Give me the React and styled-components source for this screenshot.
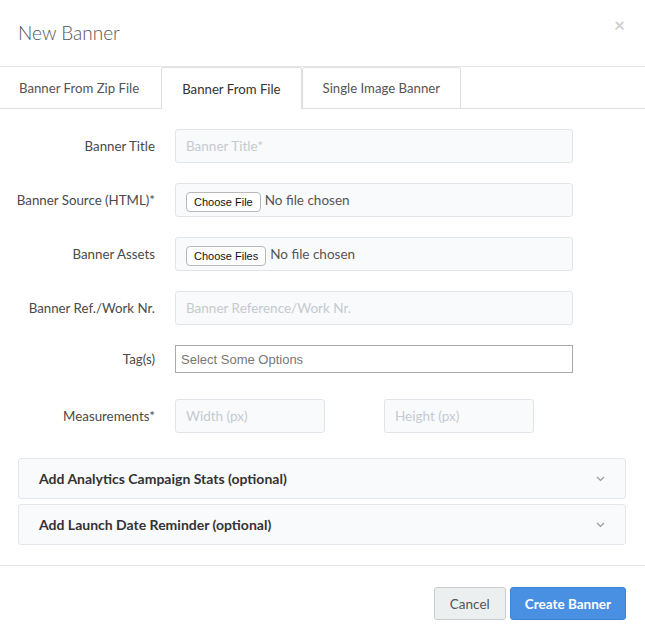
import React from 'react'
import styled, { createGlobalStyle } from 'styled-components'

const GlobalStyle = createGlobalStyle`
  html, body {
    margin: 0;
    padding: 0;
    background: #fff;
  }
  body {
    font-family: Lato, "Noto Sans", "Liberation Sans", sans-serif;
    font-size: 14px;
    color: #444;
  }
  * { box-sizing: border-box; }
`

const Modal = styled.div`
  width: 645px;
  height: 638px;
  background: #fff;
  display: flex;
  flex-direction: column;
`

const Header = styled.div`
  height: 67px;
  padding: 0 18px;
  display: flex;
  align-items: center;
  justify-content: space-between;
  border-bottom: 1px solid #e5e5e5;
`

const Title = styled.h4`
  margin: 0;
  margin-top: -2px;
  font-size: 19px;
  font-weight: 300;
  color: #555;
`

const Close = styled.span`
  font-size: 19px;
  font-weight: 700;
  color: #cfcfcf;
  margin-top: -17px;
  margin-right: 2px;
  line-height: 1;
`

const Tabs = styled.div`
  display: flex;
  height: 42px;
  border-bottom: 1px solid #dde0e3;
`

const Tab = styled.div`
  display: flex;
  align-items: center;
  padding: 0 20px;
  font-size: 13.2px;
  color: ${(p) => (p.active ? '#333' : '#555')};
  background: #fff;
  border: 1px solid ${(p) => (p.bordered || p.active ? '#dde0e3' : 'transparent')};
  border-bottom: none;
  border-radius: 3px 3px 0 0;
  margin-bottom: ${(p) => (p.active ? '-1px' : '0')};
  height: ${(p) => (p.active ? '42px' : '41px')};
  &:first-child {
    padding-left: 18px;
    padding-right: 21px;
  }
`

const Body = styled.div`
  padding: 20px 19px 0 18px;
  display: flex;
  flex-direction: column;
`

const Row = styled.div`
  display: grid;
  grid-template-columns: 137px 398px;
  column-gap: 20px;
  align-items: ${(p) => (p.top ? 'start' : 'center')};
  min-height: 34px;
  margin-bottom: ${(p) => p.gap || 20}px;
`

const Label = styled.label`
  display: flex;
  justify-content: flex-end;
  white-space: nowrap;
  font-size: 13.3px;
  color: #4a4a4a;
  line-height: ${(p) => (p.short ? '28px' : 'normal')};
`

const Input = styled.input`
  width: ${(p) => p.w || '100%'};
  height: 34px;
  padding: 0 10px;
  background: #f9fafb;
  border: 1px solid #e1e4e8;
  border-radius: 3px;
  font-family: inherit;
  font-size: 13.5px;
  color: #333;
  outline: none;
  &::placeholder {
    color: #c4cad0;
  }
`

const FileBox = styled.div`
  height: 34px;
  padding: 0 10px;
  background: #f9fafb;
  border: 1px solid #e1e4e8;
  border-radius: 3px;
  display: flex;
  align-items: center;
  gap: 4px;
`

const FileButton = styled.span`
  font-family: "Liberation Sans", Arial, sans-serif;
  font-size: 11px;
  color: #111;
  background: #fff;
  border: 1px solid #b8b8b8;
  border-radius: 4px;
  padding: 2px 7px 2px;
  line-height: 14px;
  margin-top: 3px;
`

const FileText = styled.span`
  font-size: 13.5px;
  color: #555;
  margin-top: -1px;
`

const Select = styled.div`
  height: 28px;
  border: 1px solid #aaa;
  background: #fff;
  display: flex;
  align-items: center;
  padding: 0 5px;
  font-family: "Liberation Sans", Arial, sans-serif;
  font-size: 13px;
  color: #777;
`

const Pair = styled.div`
  display: flex;
  gap: 59px;
`

const Panel = styled.div`
  height: 41px;
  background: #f9fafc;
  border: 1px solid #e3e6ea;
  border-radius: 3px;
  padding: 0 20px;
  display: flex;
  align-items: center;
  justify-content: space-between;
  margin-bottom: 5px;
  font-size: 14px;
  font-weight: 700;
  color: #333;
`

const Footer = styled.div`
  margin-top: 15px;
  border-top: 1px solid #e5e5e5;
  padding: 21px 19px 0;
  display: flex;
  justify-content: flex-end;
  gap: 4px;
`

const Button = styled.button`
  height: 33px;
  padding: 0 ${(p) => (p.primary ? '14px' : '15px')};
  font-family: inherit;
  font-size: 13.5px;
  font-weight: ${(p) => (p.primary ? 700 : 400)};
  color: ${(p) => (p.primary ? '#fff' : '#555')};
  background: ${(p) => (p.primary ? '#4a90e2' : '#eceff0')};
  border: 1px solid ${(p) => (p.primary ? '#3e84d6' : '#c9cccd')};
  border-radius: 3px;
`

const Chevron = () => (
  <svg width="9" height="6" viewBox="0 0 9 6">
    <path d="M1 1l3.5 3.5L8 1" fill="none" stroke="#999" strokeWidth="1.2" />
  </svg>
)

export default function App() {
  return (
    <Modal>
      <GlobalStyle />
      <Header>
        <Title>New Banner</Title>
        <Close>×</Close>
      </Header>
      <Tabs>
        <Tab>Banner From Zip File</Tab>
        <Tab active>Banner From File</Tab>
        <Tab bordered>Single Image Banner</Tab>
      </Tabs>
      <Body>
        <Row>
          <Label>Banner Title</Label>
          <Input placeholder="Banner Title*" />
        </Row>
        <Row>
          <Label>Banner Source (HTML)*</Label>
          <FileBox>
            <FileButton>Choose File</FileButton>
            <FileText>No file chosen</FileText>
          </FileBox>
        </Row>
        <Row>
          <Label>Banner Assets</Label>
          <FileBox>
            <FileButton>Choose Files</FileButton>
            <FileText>No file chosen</FileText>
          </FileBox>
        </Row>
        <Row>
          <Label>Banner Ref./Work Nr.</Label>
          <Input placeholder="Banner Reference/Work Nr." />
        </Row>
        <Row top>
          <Label short>Tag(s)</Label>
          <Select>Select Some Options</Select>
        </Row>
        <Row gap={25}>
          <Label>Measurements*</Label>
          <Pair>
            <Input w="150px" placeholder="Width (px)" />
            <Input w="150px" placeholder="Height (px)" />
          </Pair>
        </Row>
        <Panel>
          <span>Add Analytics Campaign Stats (optional)</span>
          <Chevron />
        </Panel>
        <Panel>
          <span>Add Launch Date Reminder (optional)</span>
          <Chevron />
        </Panel>
      </Body>
      <Footer>
        <Button>Cancel</Button>
        <Button primary>Create Banner</Button>
      </Footer>
    </Modal>
  )
}
